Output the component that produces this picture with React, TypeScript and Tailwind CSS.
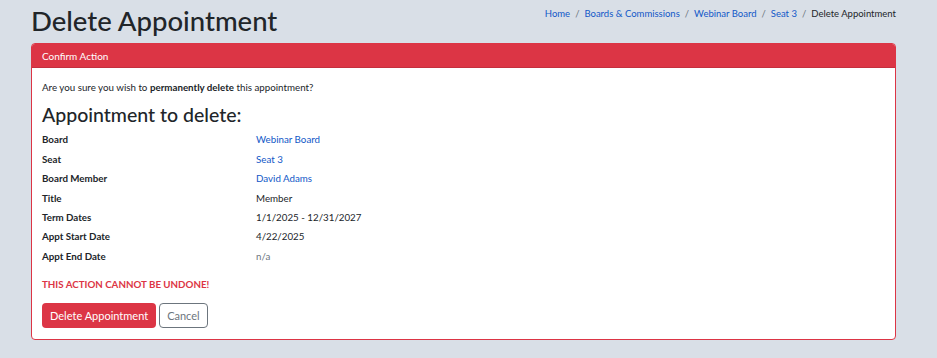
const rows: { label: string; value: string; link?: boolean; muted?: boolean }[] = [
  { label: 'Board', value: 'Webinar Board', link: true },
  { label: 'Seat', value: 'Seat 3', link: true },
  { label: 'Board Member', value: 'David Adams', link: true },
  { label: 'Title', value: 'Member' },
  { label: 'Term Dates', value: '1/1/2025 - 12/31/2027' },
  { label: 'Appt Start Date', value: '4/22/2025' },
  { label: 'Appt End Date', value: 'n/a', muted: true },
];

const crumbs = ['Home', 'Boards & Commissions', 'Webinar Board', 'Seat 3'];

export default function App() {
  return (
    <div className="min-h-[358px] bg-[#d9dfe7] px-[31px] pt-[4px] font-['Lato',sans-serif] text-[#212529]">
      <div className="flex items-start justify-between">
        <h1 className="text-[27.5px] leading-[34px] font-medium text-[#212529]">Delete Appointment</h1>
        <nav className="mt-[3px] mr-[10px] flex items-center text-[9.5px] leading-[14px]">
          {crumbs.map((c) => (
            <span key={c} className="flex items-center">
              <a className="text-[#1158c7]">{c}</a>
              <span className="px-[5px] text-[#6c757d]">/</span>
            </span>
          ))}
          <span className="text-[#212529]">Delete Appointment</span>
        </nav>
      </div>

      <div className="mt-[5px] mr-[10px] overflow-hidden rounded-[4px] border border-[#dc3545] bg-white">
        <div className="h-[24px] bg-[#dc3545] px-[10px] text-[10px] leading-[24px] text-white border-b border-[#c42f3e]">
          Confirm Action
        </div>
        <div className="px-[10px] pt-[12px] pb-[11px]">
          <p className="text-[9.75px] leading-[14px]">
            Are you sure you wish to <strong className="font-bold">permanently delete</strong> this appointment?
          </p>
          <h2 className="mt-[9px] text-[19.5px] leading-[24px] font-medium">Appointment to delete:</h2>
          <dl className="mt-[3px] text-[9.75px]">
            {rows.map((r) => (
              <div key={r.label} className="grid h-[19.4px] grid-cols-[214px_1fr] items-center">
                <dt className="font-bold">{r.label}</dt>
                <dd className={r.link ? 'text-[#1158c7]' : r.muted ? 'text-[#6c757d]' : ''}>{r.value}</dd>
              </div>
            ))}
          </dl>
          <p className="mt-[11px] text-[9.75px] font-bold text-[#dc3545]">THIS ACTION CANNOT BE UNDONE!</p>
          <div className="mt-[12px] flex gap-[3px]">
            <button className="h-[25px] rounded-[4px] bg-[#dc3545] px-[8px] text-[11px] text-white">Delete Appointment</button>
            <button className="h-[25px] rounded-[4px] border border-[#6c757d] bg-white px-[7px] text-[11px] text-[#6c757d]">Cancel</button>
          </div>
        </div>
      </div>
    </div>
  );
}
